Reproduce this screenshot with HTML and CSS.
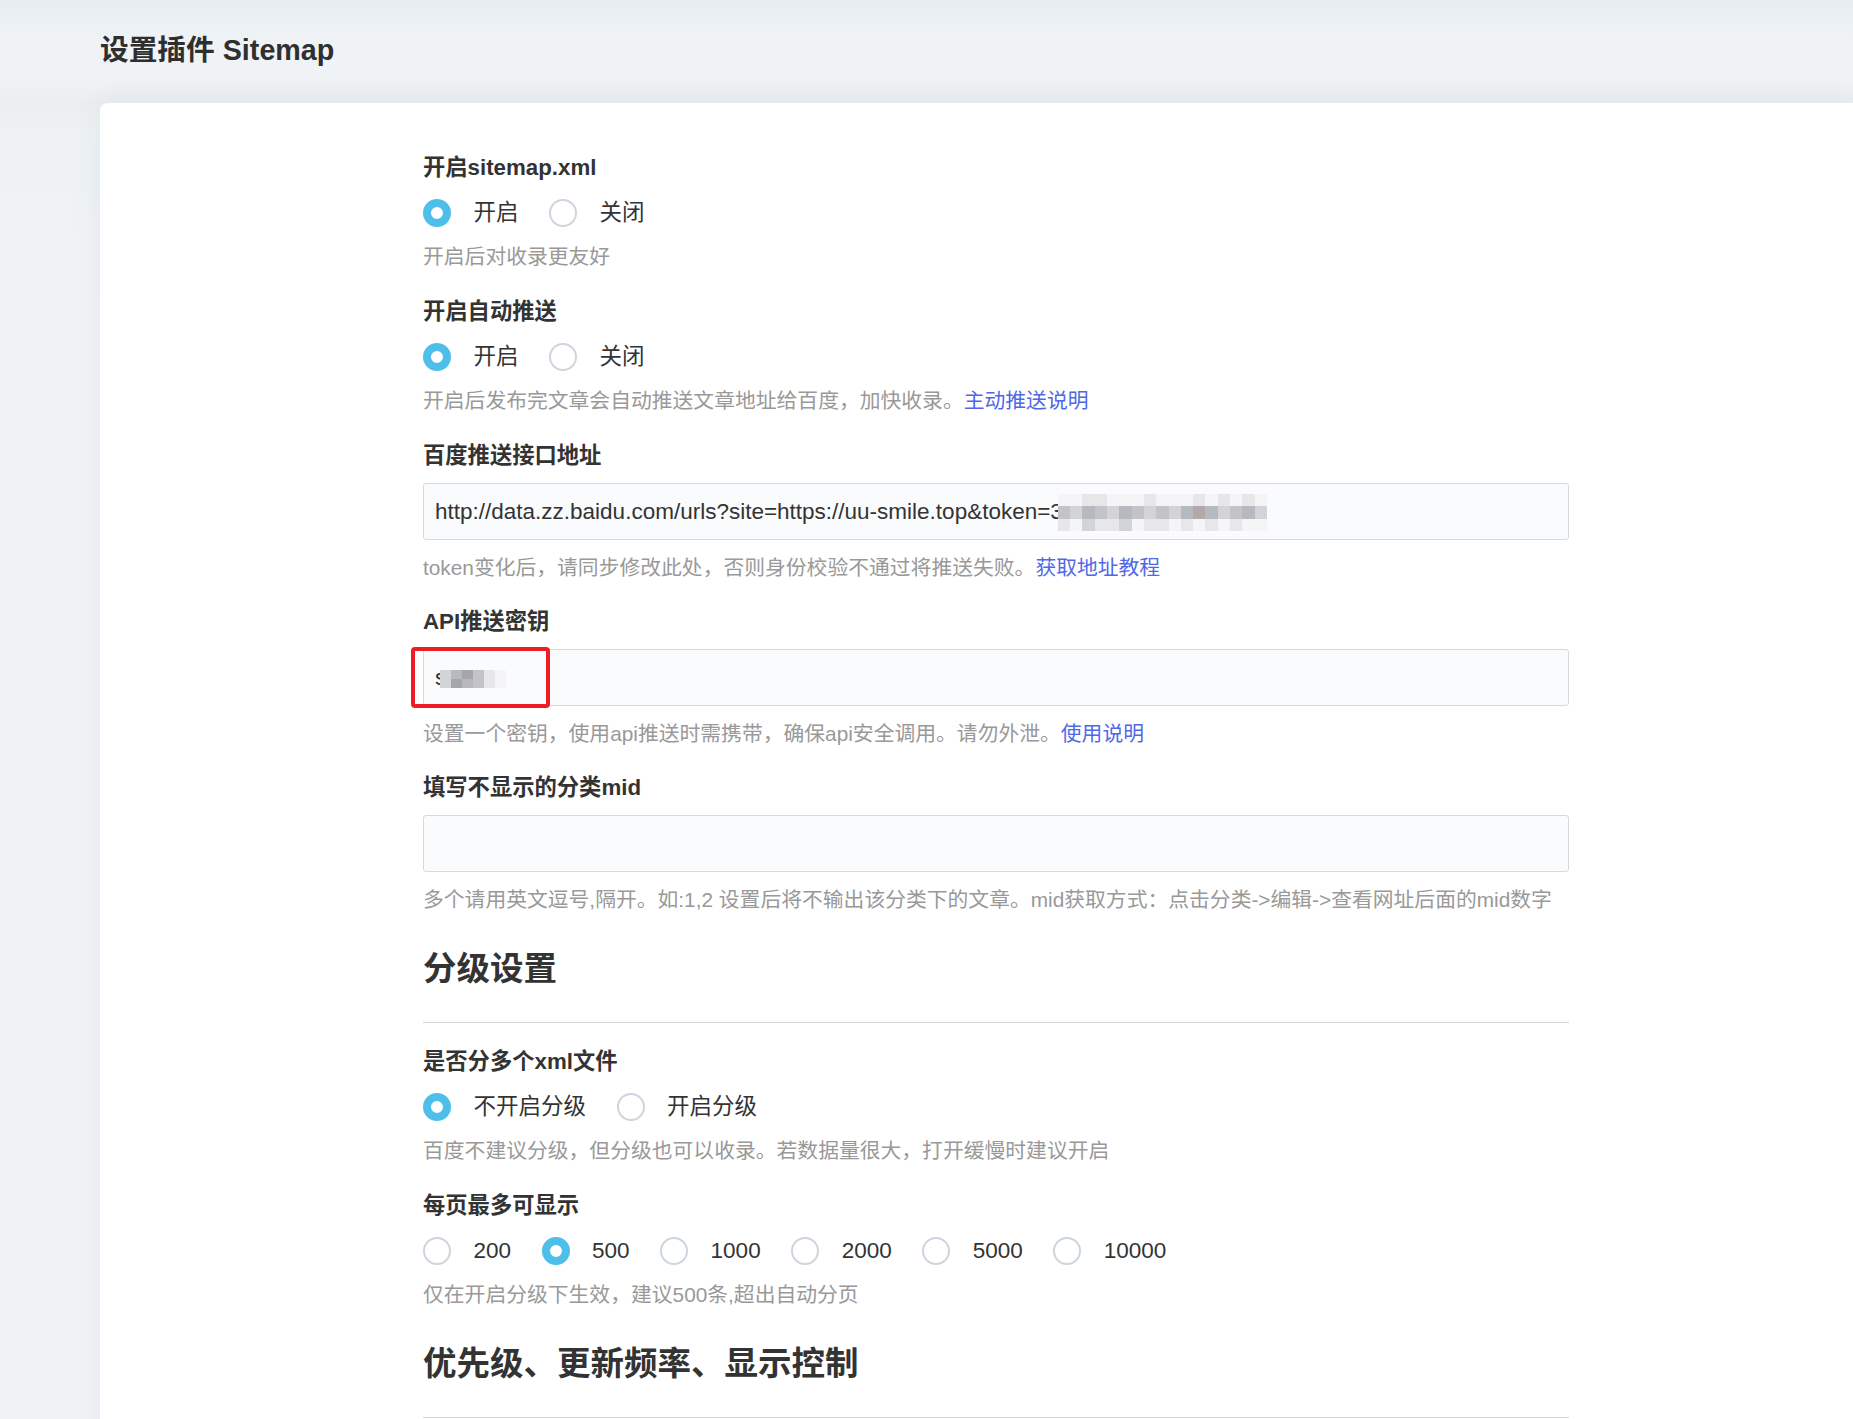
FILE: index.html
```html
<!DOCTYPE html>
<html lang="zh-CN">
<head>
<meta charset="utf-8">
<title>设置插件 Sitemap</title>
<link rel="stylesheet" href="styles.css">
</head>
<body>
<div class="page">
  <h1 class="title">设置插件 Sitemap</h1>
  <div class="card">
    <div class="form">

      <div class="option option-radio">
        <label class="label">开启sitemap.xml</label>
        <div class="radios">
          <span class="radio checked"></span><span class="rtext">开启</span>
          <span class="radio"></span><span class="rtext">关闭</span>
        </div>
        <p class="help">开启后对收录更友好</p>
      </div>

      <div class="option option-radio">
        <label class="label">开启自动推送</label>
        <div class="radios">
          <span class="radio checked"></span><span class="rtext">开启</span>
          <span class="radio"></span><span class="rtext">关闭</span>
        </div>
        <p class="help">开启后发布完文章会自动推送文章地址给百度，加快收录。<a href="#" class="link">主动推送说明</a></p>
      </div>

      <div class="option option-input">
        <label class="label">百度推送接口地址</label>
        <div class="input"><span class="val">http://data.zz.baidu.com/urls?site=https://uu-smile.top&amp;token=3</span><span class="mosaic big">
          <i class="a"></i><i class="a"></i><i class="b"></i><i class="b"></i><i class="a"></i><i class="a"></i><i class="a"></i><i class="b"></i><i class="a"></i><i class="a"></i><i class="a"></i><i class="b"></i><i class="a"></i><i class="b"></i><i class="a"></i><i class="b"></i><i class="a"></i>
          <i class="d"></i><i class="c"></i><i class="e"></i><i class="d"></i><i class="c"></i><i class="e"></i><i class="d"></i><i class="c"></i><i class="d"></i><i class="c"></i><i class="e"></i><i class="f"></i><i class="e"></i><i class="c"></i><i class="d"></i><i class="e"></i><i class="c"></i>
          <i class="b"></i><i class="a"></i><i class="c"></i><i class="b"></i><i class="b"></i><i class="c"></i><i class="a"></i><i class="b"></i><i class="b"></i><i class="a"></i><i class="b"></i><i class="a"></i><i class="b"></i><i class="a"></i><i class="b"></i><i class="a"></i><i class="a"></i>
        </span></div>
        <p class="help">token变化后，请同步修改此处，否则身份校验不通过将推送失败。<a href="#" class="link">获取地址教程</a></p>
      </div>

      <div class="option option-input">
        <label class="label">API推送密钥</label>
        <div class="input-wrap">
          <div class="input"><span class="val">s</span><span class="mosaic small">
            <i class="c"></i><i class="e"></i><i class="g"></i><i class="d"></i><i class="b"></i><i class="a"></i>
            <i class="c"></i><i class="g"></i><i class="e"></i><i class="d"></i><i class="b"></i><i class="a"></i>
          </span></div>
          <span class="annot"></span>
        </div>
        <p class="help">设置一个密钥，使用api推送时需携带，确保api安全调用。请勿外泄。<a href="#" class="link">使用说明</a></p>
      </div>

      <div class="option option-input">
        <label class="label">填写不显示的分类mid</label>
        <div class="input"></div>
        <p class="help">多个请用英文逗号,隔开。如:1,2 设置后将不输出该分类下的文章。mid获取方式：点击分类-&gt;编辑-&gt;查看网址后面的mid数字</p>
      </div>

      <h2 class="section">分级设置</h2>

      <div class="option option-radio first">
        <label class="label">是否分多个xml文件</label>
        <div class="radios">
          <span class="radio checked"></span><span class="rtext">不开启分级</span>
          <span class="radio"></span><span class="rtext">开启分级</span>
        </div>
        <p class="help">百度不建议分级，但分级也可以收录。若数据量很大，打开缓慢时建议开启</p>
      </div>

      <div class="option option-radio">
        <label class="label">每页最多可显示</label>
        <div class="radios">
          <span class="radio"></span><span class="rtext">200</span>
          <span class="radio checked"></span><span class="rtext">500</span>
          <span class="radio"></span><span class="rtext">1000</span>
          <span class="radio"></span><span class="rtext">2000</span>
          <span class="radio"></span><span class="rtext">5000</span>
          <span class="radio"></span><span class="rtext">10000</span>
        </div>
        <p class="help">仅在开启分级下生效，建议500条,超出自动分页</p>
      </div>

      <h2 class="section">优先级、更新频率、显示控制</h2>

    </div>
  </div>
</div>
</body>
</html>
```
FILE: styles.css
```css
* { box-sizing: border-box; }

html, body {
  margin: 0;
  padding: 0;
}

body {
  font-family: "Liberation Sans", "Noto Sans CJK SC", sans-serif;
  color: #333;
  background: linear-gradient(180deg, #e8edf1 0px, #eff3f6 40px, #f0f3f6 75px, #eaeef1 103px, #eef2f5 140px, #f0f3f6 300px);
  overflow: hidden;
}

.page {
  padding-left: 100px;
}

.title {
  margin: 0;
  padding-top: 30px;
  font-size: 28.7px;
  line-height: 40px;
  font-weight: bold;
  color: #2f2f2f;
}

.card {
  margin-top: 33px;
  background: #fff;
  border-radius: 8px 0 0 0;
  box-shadow: 0 0 30px rgba(40, 60, 90, 0.06);
  padding: 50px 0 200px 323px;
}

.form {
  width: 1146px;
}

.option {
  margin-bottom: 25px;
}

.option-radio {
  margin-bottom: 26px;
}

.option.first {
  margin-top: 24px;
}

.label {
  display: block;
  font-size: 22.3px;
  line-height: 26px;
  padding-top: 2px;
  font-weight: bold;
  color: #333;
  margin-bottom: 14px;
}

.radios {
  display: flex;
  align-items: center;
  height: 36px;
}

.radio {
  width: 28px;
  height: 28px;
  border-radius: 50%;
  border: 2px solid #cdd5df;
  background: #fff;
  margin-right: 22.5px;
  flex: none;
}

.radio.checked {
  border: 8px solid #4dbfea;
}

.rtext {
  font-size: 22.5px;
  line-height: 36px;
  color: #333;
  margin-right: 30.5px;
}

.help {
  margin: 12px 0 0;
  font-size: 20.8px;
  line-height: 28px;
  color: #999;
}

.option-input .help {
  margin-top: 14px;
}

.link {
  color: #5068e8;
  text-decoration: none;
}

.input {
  height: 57px;
  border: 1px solid #d9d9d9;
  border-radius: 3px;
  background: #fafbfd;
  padding: 0 11px;
  display: flex;
  align-items: center;
  font-size: 22.5px;
  color: #333;
  white-space: nowrap;
}

.input-wrap {
  position: relative;
}

.annot {
  position: absolute;
  left: -12px;
  top: -2px;
  width: 139px;
  height: 61px;
  border: 4px solid #ee1d23;
  border-radius: 4px;
}

.mosaic {
  display: inline-grid;
}

.mosaic.big {
  grid-template-columns: repeat(17, 12.3px);
  grid-auto-rows: 12.5px;
  margin-left: -5px;
  margin-top: 2px;
}

.mosaic.small {
  grid-template-columns: repeat(6, 11px);
  grid-auto-rows: 9px;
  margin-left: -6px;
  margin-top: 2px;
}

.mosaic i { display: block; }
.mosaic .a { background: #f5f5f7; }
.mosaic .b { background: #e7e7ea; }
.mosaic .c { background: #d3d4d8; }
.mosaic .d { background: #c4c4c8; }
.mosaic .e { background: #b7b9c0; }
.mosaic .f { background: #b1a9aa; }
.mosaic .g { background: #a5a5aa; }

.section {
  margin: 33px 0 0;
  font-size: 33.5px;
  line-height: 44px;
  font-weight: bold;
  color: #333;
  padding-bottom: 31px;
  border-bottom: 1px solid #d6d6d6;
}
```
